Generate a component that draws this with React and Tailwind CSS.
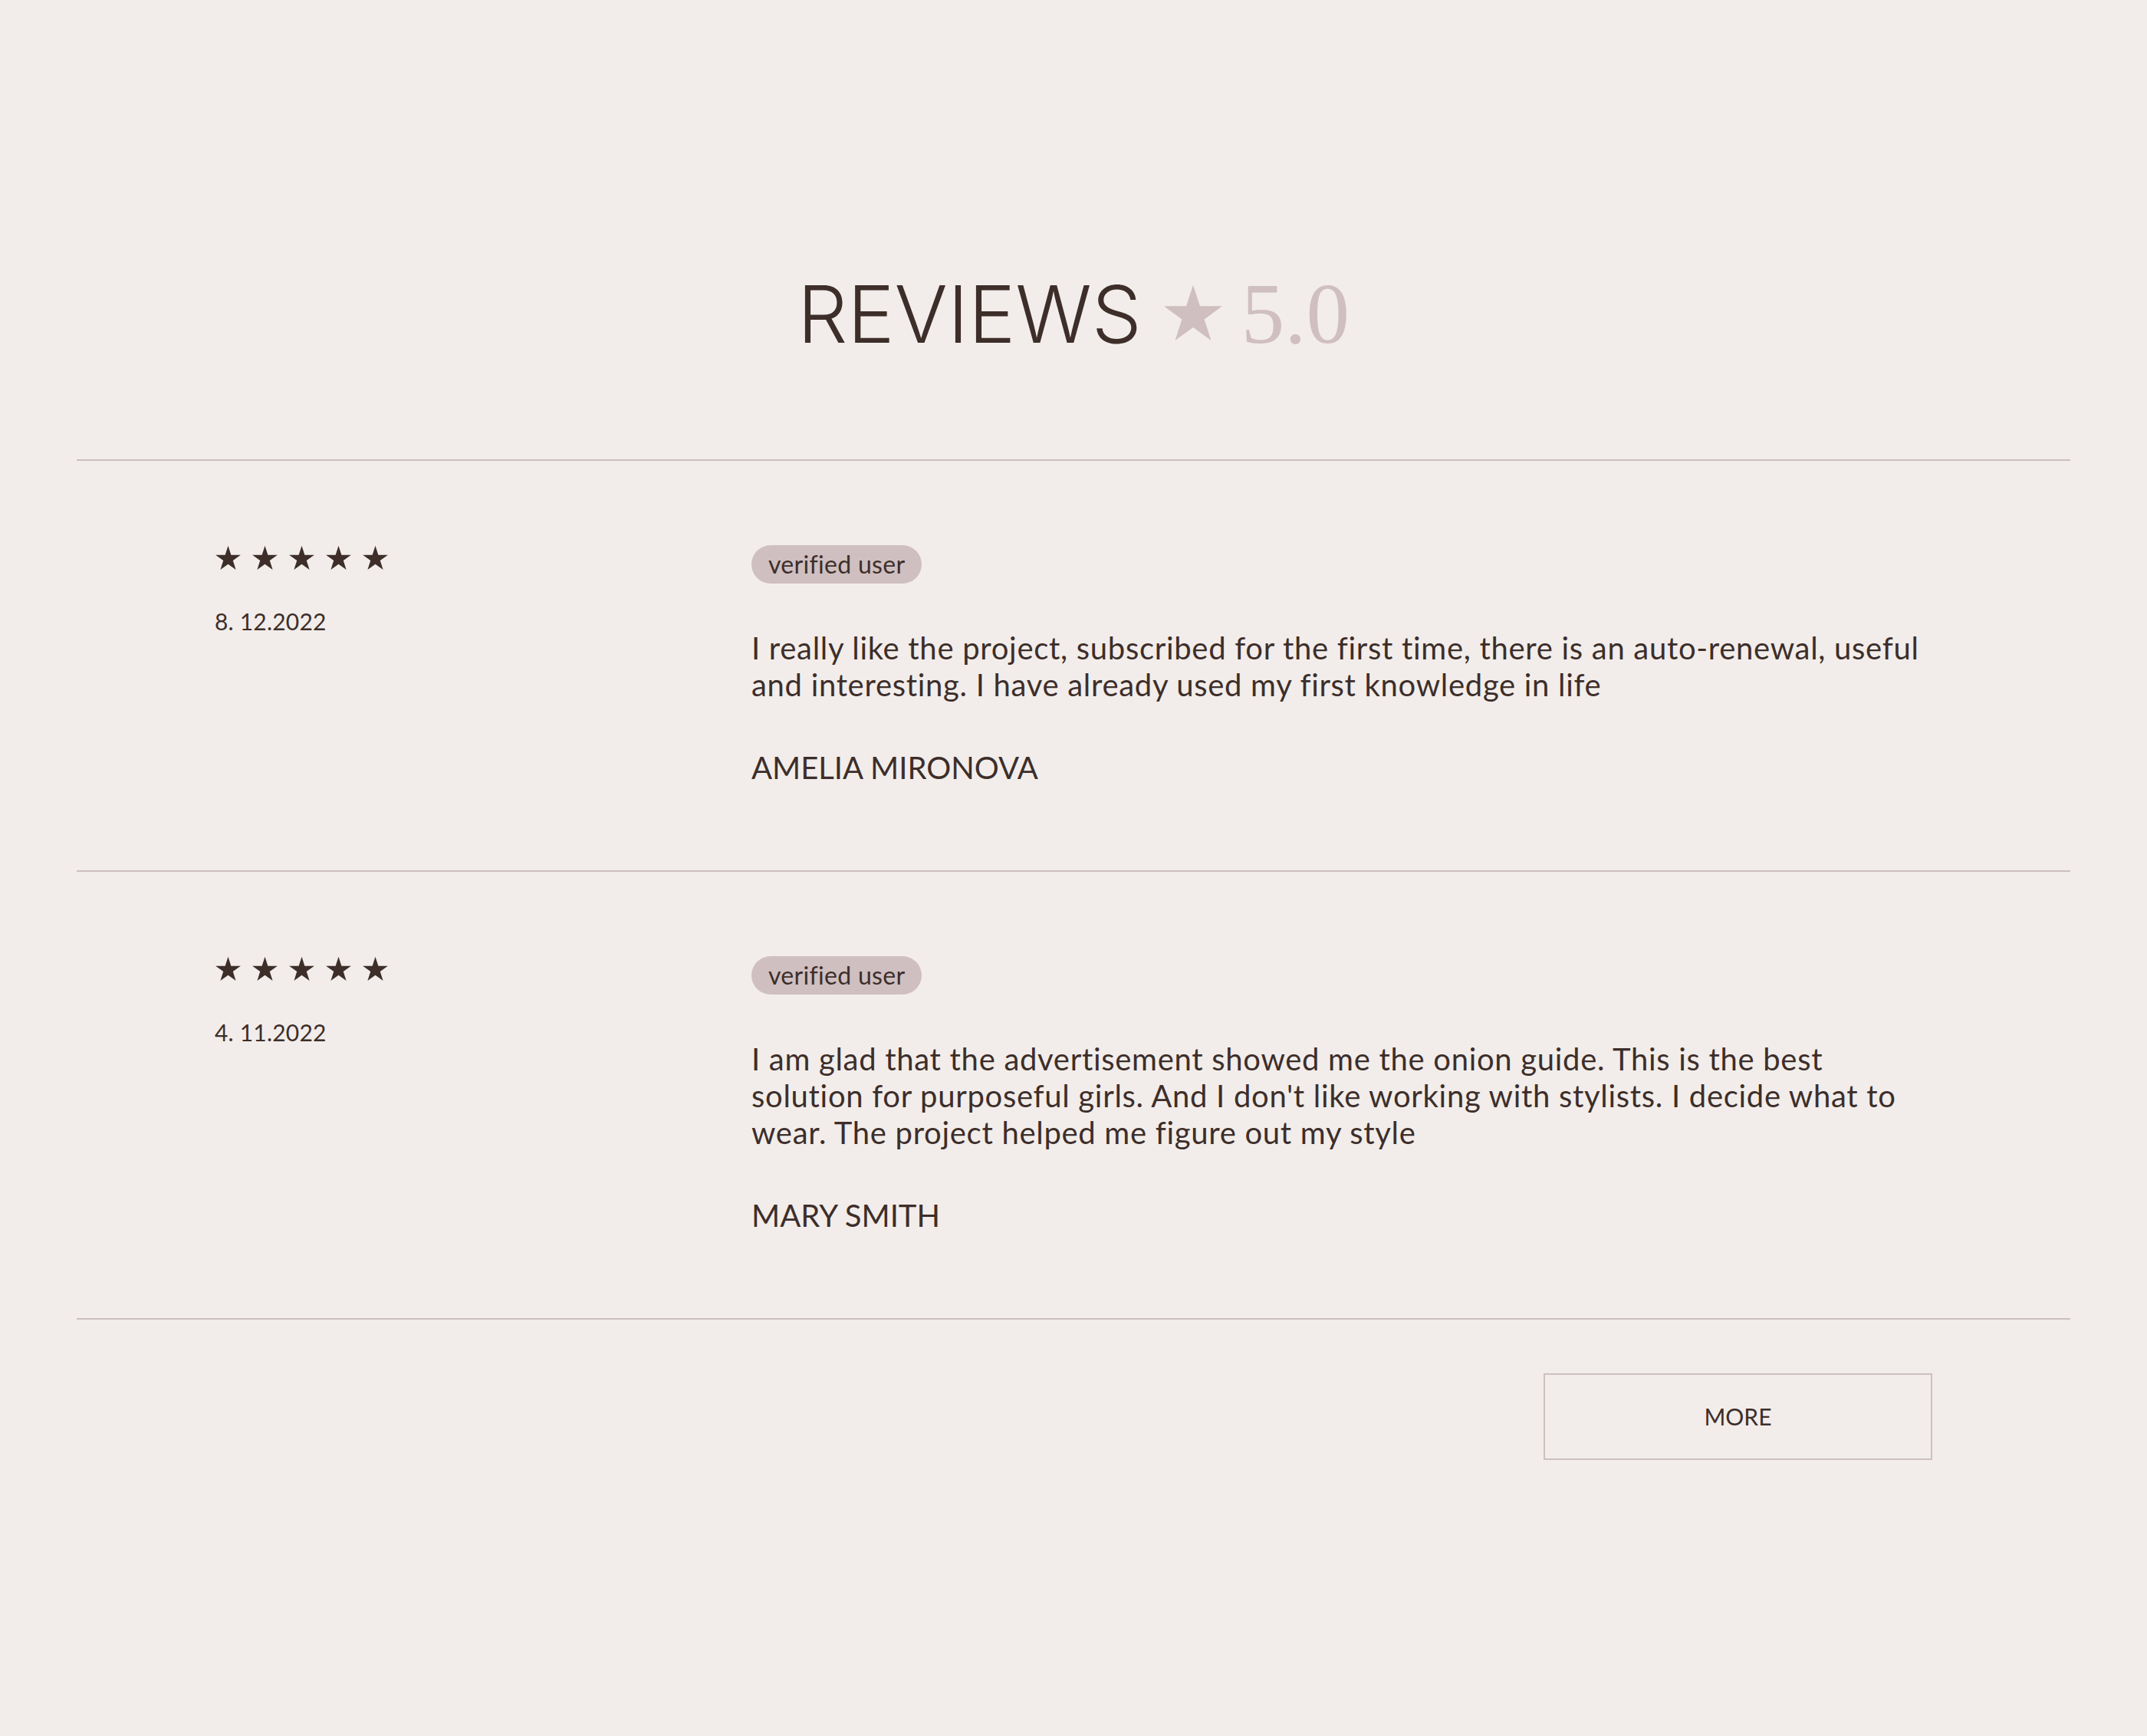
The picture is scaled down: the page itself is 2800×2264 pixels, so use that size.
const REVIEWS = [
  {
    date: "8. 12.2022",
    text: "I really like the project, subscribed for the first time, there is an auto-renewal, useful and interesting. I have already used my first knowledge in life",
    name: "AMELIA MIRONOVA",
  },
  {
    date: "4. 11.2022",
    text: "I am glad that the advertisement showed me the onion guide. This is the best solution for purposeful girls. And I don't like working with stylists. I decide what to wear. The project helped me figure out my style",
    name: "MARY SMITH",
  },
];

function Star({ className }) {
  return (
    <svg viewBox="0 0 24 23" className={className} fill="currentColor">
      <path d="M12 0.6L14.7 8.89L23.41 8.89L16.37 14.02L19.05 22.31L12 17.19L4.95 22.31L7.63 14.02L0.59 8.89L9.3 8.89Z" />
    </svg>
  );
}

function ReviewRow({ review }) {
  return (
    <div className="flex border-b-2 border-[#cbbfbf] px-[180px] py-[110px]">
      <div className="w-[700px] shrink-0">
        <div className="flex gap-[13px] text-[#3d2e2a]">
          {[0, 1, 2, 3, 4].map((i) => (
            <Star key={i} className="h-[33px] w-[35px]" />
          ))}
        </div>
        <div className="mt-[46px] text-[30px] leading-[40px] tracking-[0.2px] text-[#3d2e2a]">
          {review.date}
        </div>
      </div>
      <div className="flex-1">
        <span className="inline-flex h-[50px] items-center rounded-full bg-[#cfbfc0] px-[22px] text-[32px] tracking-[0.3px] text-[#3d2e2a]">
          verified user
        </span>
        <p className="mt-[60px] text-[40px] leading-[48px] tracking-[0.7px] text-[#3d2e2a]">
          {review.text}
        </p>
        <div className="mt-[60px] text-[40px] leading-[48px] text-[#3d2e2a]">
          {review.name}
        </div>
      </div>
    </div>
  );
}

export default function App() {
  return (
    <div className="min-h-[2264px] bg-[#f2edea] font-['Lato',sans-serif] text-[#3d2e2a]">
      <div className="flex items-baseline justify-center pt-[352px] pb-[134px]">
        <span className="font-['Inter',sans-serif] text-[103px] leading-none font-light text-[#3d2e2a]">
          REVIEWS
        </span>
        <Star className="ml-[27px] h-[78px] w-[80px] text-[#cfbfc0]" />
        <span className="ml-[23px] font-['Liberation_Serif',serif] text-[113px] leading-none text-[#cfbfc0]">
          5.0
        </span>
      </div>
      <div className="mx-[100px] border-t-2 border-[#cbbfbf]">
        {REVIEWS.map((r) => (
          <ReviewRow key={r.name} review={r} />
        ))}
      </div>
      <div className="flex justify-end px-[280px] pt-[70px]">
        <button className="h-[113px] w-[507px] border-2 border-[#cfbfc0] text-[30px] text-[#3d2e2a]">
          MORE
        </button>
      </div>
    </div>
  );
}
